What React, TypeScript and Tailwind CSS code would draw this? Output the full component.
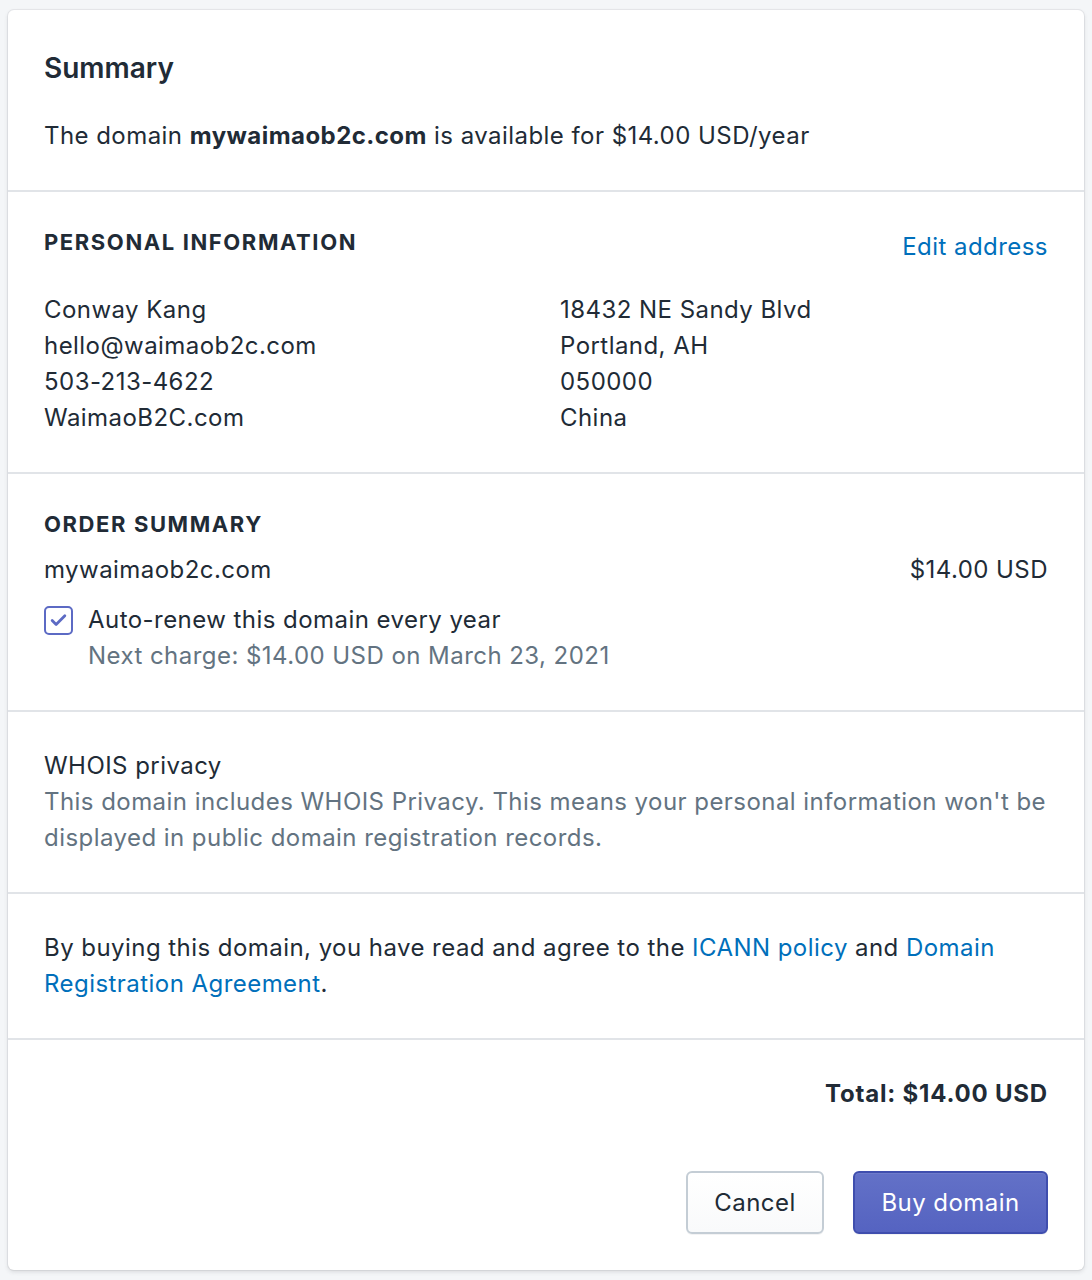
import { Check } from 'lucide-react';

const font = { fontFamily: 'Inter, "Noto Sans", sans-serif' };

const Section = ({ children, last }: { children: React.ReactNode; last?: boolean }) => (
  <div className={`px-9 ${last ? 'pt-9 pb-9' : 'py-9 border-b-2 border-[#e1e4e8]'}`}>{children}</div>
);

const Subheading = ({ children }: { children: React.ReactNode }) => (
  <h3 className="text-[22px] leading-[29px] font-bold uppercase tracking-[1.6px] text-[#212b36]">
    {children}
  </h3>
);

export default function App() {
  return (
    <div className="min-h-screen bg-[#f4f6f8] pt-[10px] pl-2 pr-2 pb-2" style={font}>
      <div className="w-[1076px] rounded-[6px] bg-white text-[24px] leading-[36px] tracking-[0.45px] text-[#212b36] shadow-[0_0_0_1px_rgba(63,63,68,0.07),0_2px_4px_0_rgba(63,63,68,0.15)]">
        {/* Summary */}
        <Section>
          <h2 className="text-[28px] leading-[43px] font-semibold tracking-normal pt-px">Summary</h2>
          <p className="mt-[28px]">
            The domain <span className="font-bold">mywaimaob2c.com</span> is available for $14.00 USD/year
          </p>
        </Section>

        {/* Personal information */}
        <Section>
          <div className="flex items-start justify-between">
            <Subheading>Personal information</Subheading>
            <a href="#" className="text-[#006fbb] mt-px leading-[36px]">
              Edit address
            </a>
          </div>
          <div className="mt-[27px] grid grid-cols-2">
            <div>
              <p>Conway Kang</p>
              <p>hello@waimaob2c.com</p>
              <p>503-213-4622</p>
              <p>WaimaoB2C.com</p>
            </div>
            <div className="pl-[14px]">
              <p>18432 NE Sandy Blvd</p>
              <p>Portland, AH</p>
              <p>050000</p>
              <p>China</p>
            </div>
          </div>
        </Section>

        {/* Order summary */}
        <Section>
          <Subheading>Order summary</Subheading>
          <div className="mt-[13px] flex justify-between">
            <span>mywaimaob2c.com</span>
            <span>$14.00 USD</span>
          </div>
          <div className="mt-[14px] flex items-start gap-[15px]">
            <span className="mt-[4px] flex h-[29px] w-[29px] shrink-0 items-center justify-center rounded-[5px] border-2 border-[#5c6ac4] bg-white">
              <Check className="h-[19px] w-[19px] text-[#5c6ac4]" strokeWidth={3.5} />
            </span>
            <div>
              <p>Auto-renew this domain every year</p>
              <p className="text-[#637381]">Next charge: $14.00 USD on March 23, 2021</p>
            </div>
          </div>
        </Section>

        {/* WHOIS */}
        <Section>
          <p>WHOIS privacy</p>
          <p className="text-[#637381]">
            This domain includes WHOIS Privacy. This means your personal information won't be displayed in public
            domain registration records.
          </p>
        </Section>

        {/* Agreement */}
        <Section>
          <p>
            By buying this domain, you have read and agree to the{' '}
            <a href="#" className="text-[#006fbb]">ICANN policy</a> and{' '}
            <a href="#" className="text-[#006fbb]">Domain Registration Agreement</a>.
          </p>
        </Section>

        {/* Total + actions */}
        <Section last>
          <p className="text-right font-bold tracking-[0.8px]">Total: $14.00 USD</p>
          <div className="mt-[59px] flex justify-end gap-[29px]">
            <button className="h-[63px] w-[138px] rounded-[6px] border-2 border-[#c4cdd5] bg-gradient-to-b from-white to-[#f9fafb] text-[#212b36] shadow-[0_1px_0_0_rgba(22,29,37,0.05)]">
              Cancel
            </button>
            <button className="h-[63px] w-[195px] rounded-[6px] border-2 border-[#3f4eae] bg-gradient-to-b from-[#6371c7] to-[#5563c1] text-white shadow-[inset_0_1px_0_0_#6f7bcb,0_1px_0_0_rgba(22,29,37,0.05)]">
              Buy domain
            </button>
          </div>
        </Section>
      </div>
    </div>
  );
}
